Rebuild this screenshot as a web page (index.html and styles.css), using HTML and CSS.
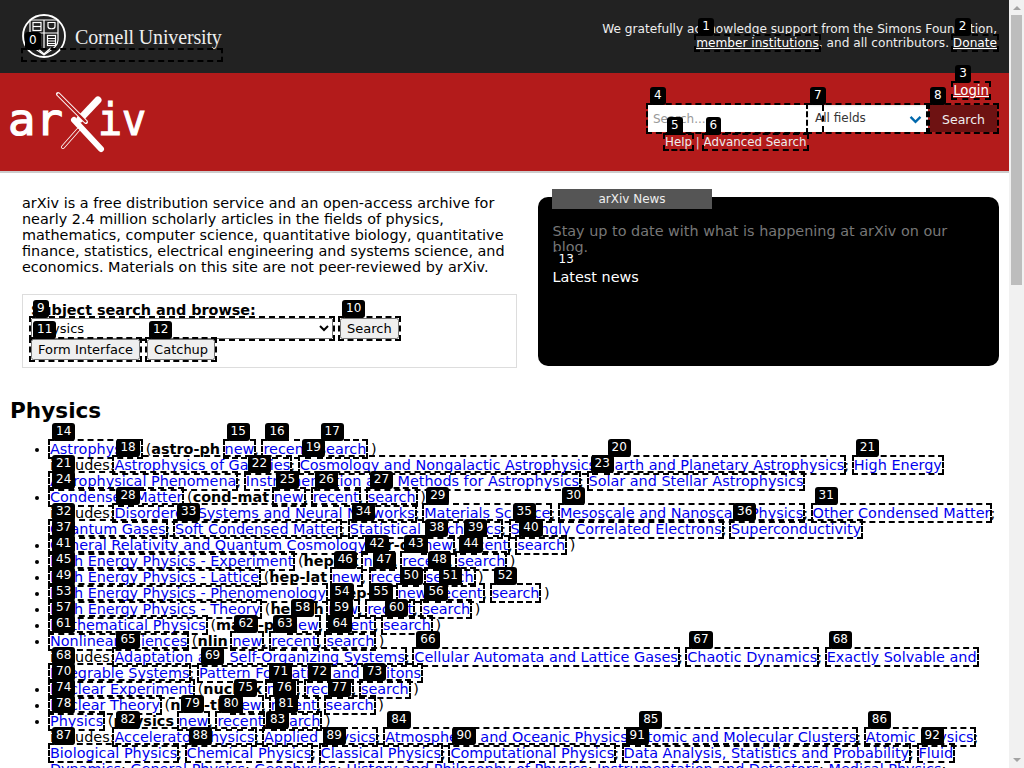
FILE: index.html
```html
<!DOCTYPE html>
<html lang="en">
<head>
<meta charset="utf-8">
<title>arXiv.org e-Print archive</title>
<link rel="stylesheet" href="styles.css">
</head>
<body>
<div class="scrollbar" aria-hidden="true"><span class="arrow-up"></span><span class="thumb"></span><span class="arrow-down"></span></div>
<header>
  <div class="topbar">
    <div class="cornell">
      <svg class="seal" viewBox="0 0 44 44" width="44" height="44" aria-hidden="true">
        <circle cx="22" cy="22" r="21" fill="#222" stroke="#fff" stroke-width="1.800"/>
        <g fill="none" stroke="#fff" stroke-width="1.200">
          <path d="M8 6h28v20c0 7-7 10-14 15C15 36 8 33 8 26z"/>
          <path d="M8 19h28M22 6v28"/>
          <rect x="11" y="8.500" width="8" height="8"/>
          <path d="M11 12.500h8"/>
          <path d="M26 8.500h7v4c0 3-7 3-7 0z"/>
          <rect x="25.500" y="21.500" width="8" height="10"/>
          <path d="M25.500 24.500h8M25.500 27h8M25.500 29.500h8"/>
          <rect x="10.500" y="21.500" width="8" height="10"/>
          <path d="M10.500 24.500h8M10.500 27h8M10.500 29.500h8"/>
          <path d="M15 34l7 6 7-6" stroke-width="1.600"/>
        </g>
      </svg>
      <span class="cornell-name">Cornell University</span>
      <a class="b cornell-box" href="#"><span class="t">0</span></a>
    </div>
    <p class="support">We gratefully acknowledge support from the Simons Foundation,<br>
      <a class="b lt" href="#">member institutions<span class="t">1</span></a>, and all contributors. <a class="b lt" href="#">Donate<span class="t">2</span></a></p>
  </div>
  <div class="redbar">
    <svg class="arxiv-logo" viewBox="0 0 150 80" width="150" height="80" role="img" aria-label="arXiv">
      <text class="logo-letters" x="8" y="50" textLength="55" lengthAdjust="spacingAndGlyphs">ar</text>
      <text class="logo-letters" x="98" y="50" textLength="48" lengthAdjust="spacingAndGlyphs">iv</text>
      <path d="M98 15L80 34" stroke="#fff" stroke-width="7" stroke-linecap="round"/>
      <path d="M74 35l27 29" stroke="#fff" stroke-width="6" stroke-linecap="round"/>
      <path d="M58 9l28 28" stroke="#fff" stroke-width="4" stroke-linecap="round"/>
      <path d="M58.500 9.500l27 27" stroke="#b31b1b" stroke-width="2.400" stroke-linecap="round"/>
      <path d="M63 62l15-17" stroke="#fff" stroke-width="4" stroke-linecap="round"/>
      <path d="M63 62l15-17" stroke="#b31b1b" stroke-width="2.400" stroke-linecap="round"/>
    </svg>
    <div class="search-area">
      <div class="login-row"><a class="b lt" href="#">Login<span class="t">3</span></a></div>
      <form class="search-form">
        <span class="b field"><input class="q" type="text" placeholder="Search..."><span class="t">4</span></span>
        <span class="b field"><span class="fields">All fields<svg class="chev" viewBox="0 0 14 10" width="13" height="9" aria-hidden="true"><path d="M1.500 2l5.500 5.500L12.500 2" fill="none" stroke="#0068ac" stroke-width="2.600"/></svg></span><span class="t">7</span></span>
        <span class="b field"><button class="go" type="button">Search</button><span class="t">8</span></span>
      </form>
      <div class="help-row"><a class="b hl" href="#">Help<span class="t">5</span></a> | <a class="b hl" href="#">Advanced Search<span class="t">6</span></a></div>
    </div>
  </div>
</header>
<main>
  <div class="intro">
    <div class="left">
      <p class="blurb">arXiv is a free distribution service and an open-access archive for nearly 2.4 million scholarly articles in the fields of physics, mathematics, computer science, quantitative biology, quantitative finance, statistics, electrical engineering and systems science, and economics. Materials on this site are not peer-reviewed by arXiv.</p>
      <form class="subject">
        <h2 class="subject-title">Subject search and browse:</h2>
        <div class="subject-row">
          <span class="b ctl"><select class="subject-select"><option>Physics</option></select><span class="t">9</span></span>
          <span class="b ctl"><button class="btn" type="button">Search</button><span class="t">10</span></span>
        </div>
        <div class="subject-row">
          <span class="b ctl"><button class="btn" type="button">Form Interface</button><span class="t">11</span></span>
          <span class="b ctl"><button class="btn" type="button">Catchup</button><span class="t">12</span></span>
        </div>
      </form>
    </div>
    <aside class="news">
      <div class="news-tab">arXiv News</div>
      <p class="news-text">Stay up to date with what is happening at arXiv on our blog.</p>
      <a class="latest" href="#">Latest news<span class="t">13</span></a>
    </aside>
  </div>

  <h2 class="group">Physics</h2>
  <ul class="archives">
    <li><a class="b" href="#">Astrophysics<span class="t">14</span></a> (<b>astro-ph</b> <a class="b" href="#">new<span class="t">15</span></a>, <a class="b" href="#">recent<span class="t">16</span></a>, <a class="b" href="#">search<span class="t">17</span></a> )<br>
    includes:<a class="b" href="#">Astrophysics of Galaxies<span class="t">18</span></a>; <a class="b" href="#">Cosmology and Nongalactic Astrophysics<span class="t">19</span></a>; <a class="b" href="#">Earth and Planetary Astrophysics<span class="t">20</span></a>; <a class="b" href="#">High Energy<span class="t">21</span></a> <a class="b" href="#">Astrophysical Phenomena<span class="t">21</span></a>; <a class="b" href="#">Instrumentation and Methods for Astrophysics<span class="t">22</span></a>; <a class="b" href="#">Solar and Stellar Astrophysics<span class="t">23</span></a></li>
    <li><a class="b" href="#">Condensed Matter<span class="t">24</span></a> (<b>cond-mat</b> <a class="b" href="#">new<span class="t">25</span></a>, <a class="b" href="#">recent<span class="t">26</span></a>, <a class="b" href="#">search<span class="t">27</span></a> )<br>
    includes:<a class="b" href="#">Disordered Systems and Neural Networks<span class="t">28</span></a>; <a class="b" href="#">Materials Science<span class="t">29</span></a>; <a class="b" href="#">Mesoscale and Nanoscale Physics<span class="t">30</span></a>; <a class="b" href="#">Other Condensed Matter<span class="t">31</span></a>; <a class="b" href="#">Quantum Gases<span class="t">32</span></a>; <a class="b" href="#">Soft Condensed Matter<span class="t">33</span></a>; <a class="b" href="#">Statistical Mechanics<span class="t">34</span></a>; <a class="b" href="#">Strongly Correlated Electrons<span class="t">35</span></a>; <a class="b" href="#">Superconductivity<span class="t">36</span></a></li>
    <li><a class="b" href="#">General Relativity and Quantum Cosmology<span class="t">37</span></a> (<b>gr-qc</b> <a class="b" href="#">new<span class="t">38</span></a>, <a class="b" href="#">recent<span class="t">39</span></a>, <a class="b" href="#">search<span class="t">40</span></a> )</li>
    <li><a class="b" href="#">High Energy Physics - Experiment<span class="t">41</span></a> (<b>hep-ex</b> <a class="b" href="#">new<span class="t">42</span></a>, <a class="b" href="#">recent<span class="t">43</span></a>, <a class="b" href="#">search<span class="t">44</span></a> )</li>
    <li><a class="b" href="#">High Energy Physics - Lattice<span class="t">45</span></a> (<b>hep-lat</b> <a class="b" href="#">new<span class="t">46</span></a>, <a class="b" href="#">recent<span class="t">47</span></a>, <a class="b" href="#">search<span class="t">48</span></a> )</li>
    <li><a class="b" href="#">High Energy Physics - Phenomenology<span class="t">49</span></a> (<b>hep-ph</b> <a class="b" href="#">new<span class="t">50</span></a>, <a class="b" href="#">recent<span class="t">51</span></a>, <a class="b" href="#">search<span class="t">52</span></a> )</li>
    <li><a class="b" href="#">High Energy Physics - Theory<span class="t">53</span></a> (<b>hep-th</b> <a class="b" href="#">new<span class="t">54</span></a>, <a class="b" href="#">recent<span class="t">55</span></a>, <a class="b" href="#">search<span class="t">56</span></a> )</li>
    <li><a class="b" href="#">Mathematical Physics<span class="t">57</span></a> (<b>math-ph</b> <a class="b" href="#">new<span class="t">58</span></a>, <a class="b" href="#">recent<span class="t">59</span></a>, <a class="b" href="#">search<span class="t">60</span></a> )</li>
    <li><a class="b" href="#">Nonlinear Sciences<span class="t">61</span></a> (<b>nlin</b> <a class="b" href="#">new<span class="t">62</span></a>, <a class="b" href="#">recent<span class="t">63</span></a>, <a class="b" href="#">search<span class="t">64</span></a> )<br>
    includes:<a class="b" href="#">Adaptation and Self-Organizing Systems<span class="t">65</span></a>; <a class="b" href="#">Cellular Automata and Lattice Gases<span class="t">66</span></a>; <a class="b" href="#">Chaotic Dynamics<span class="t">67</span></a>; <a class="b" href="#">Exactly Solvable and<span class="t">68</span></a> <a class="b" href="#">Integrable Systems<span class="t">68</span></a>; <a class="b" href="#">Pattern Formation and Solitons<span class="t">69</span></a></li>
    <li><a class="b" href="#">Nuclear Experiment<span class="t">70</span></a> (<b>nucl-ex</b> <a class="b" href="#">new<span class="t">71</span></a>, <a class="b" href="#">recent<span class="t">72</span></a>, <a class="b" href="#">search<span class="t">73</span></a> )</li>
    <li><a class="b" href="#">Nuclear Theory<span class="t">74</span></a> (<b>nucl-th</b> <a class="b" href="#">new<span class="t">75</span></a>, <a class="b" href="#">recent<span class="t">76</span></a>, <a class="b" href="#">search<span class="t">77</span></a> )</li>
    <li><a class="b" href="#">Physics<span class="t">78</span></a> (<b>physics</b> <a class="b" href="#">new<span class="t">79</span></a>, <a class="b" href="#">recent<span class="t">80</span></a>, <a class="b" href="#">search<span class="t">81</span></a> )<br>
    includes:<a class="b" href="#">Accelerator Physics<span class="t">82</span></a>; <a class="b" href="#">Applied Physics<span class="t">83</span></a>; <a class="b" href="#">Atmospheric and Oceanic Physics<span class="t">84</span></a>; <a class="b" href="#">Atomic and Molecular Clusters<span class="t">85</span></a>; <a class="b" href="#">Atomic Physics<span class="t">86</span></a>; <a class="b" href="#">Biological Physics<span class="t">87</span></a>; <a class="b" href="#">Chemical Physics<span class="t">88</span></a>; <a class="b" href="#">Classical Physics<span class="t">89</span></a>; <a class="b" href="#">Computational Physics<span class="t">90</span></a>; <a class="b" href="#">Data Analysis, Statistics and Probability<span class="t">91</span></a>; <a class="b" href="#">Fluid<span class="t">92</span></a> <a href="#">Dynamics</a>; <a href="#">General Physics</a>; <a href="#">Geophysics</a>; <a href="#">History and Philosophy of Physics</a>; <a href="#">Instrumentation and Detectors</a>; <a href="#">Medical Physics</a>;</li>
  </ul>
</main>
</body>
</html>
```

FILE: styles.css
```css
* { box-sizing: border-box; }
html, body { margin: 0; padding: 0; }
html { height: 768px; overflow: hidden; }
body {
  font-family: "DejaVu Sans", sans-serif;
  font-size: 14.4px;
  color: #000;
  background: #fff;
  margin-right: 15px;
}
a { color: #0000ee; text-decoration: none; }

/* fake window scrollbar */
.scrollbar {
  position: fixed;
  top: 0;
  right: 0;
  bottom: 0;
  width: 15px;
  background: #f1f1f1;
  display: flex;
  flex-direction: column;
  align-items: center;
}
.arrow-up {
  flex: none;
  width: 0;
  height: 0;
  margin-top: 6px;
  border: 4px solid transparent;
  border-top: 0;
  border-bottom: 4px solid #a3a3a3;
}
.thumb { flex: none; width: 11px; height: 270px; margin-top: 5px; background: #bdbdbd; }
.arrow-down {
  flex: none;
  width: 0;
  height: 0;
  margin-top: auto;
  margin-bottom: 6px;
  border: 4px solid transparent;
  border-bottom: 0;
  border-top: 4px solid #a3a3a3;
}

/* annotation overlay */
.b { position: relative; outline: 2px dashed #000; }
.t {
  position: absolute;
  left: 2px;
  bottom: 100%;
  z-index: 10;
  padding: 0 4px;
  height: 18px;
  line-height: 17px;
  font-family: "DejaVu Sans", sans-serif;
  font-size: 12px;
  font-weight: 400;
  color: #fff;
  background: #000;
  border-radius: 3px;
  white-space: nowrap;
  text-decoration: none;
  display: block;
}

/* header */
.topbar {
  height: 73px;
  background: #222;
  display: flex;
  justify-content: space-between;
  padding: 14px 12px 0 22px;
}
.cornell { position: relative; display: flex; align-items: flex-start; height: 46px; }
.seal { flex: none; }
.cornell-name {
  margin: 12px 0 0 9px;
  font-family: "Liberation Serif", serif;
  font-size: 20px;
  letter-spacing: -0.15px;
  color: #eee;
}
.cornell-box { position: absolute; display: block; left: 1px; top: 36px; width: 198px; height: 10px; }
.support {
  margin: 8px 0 0;
  color: #eee;
  font-size: 12.150px;
  line-height: 14px;
  text-align: right;
}
.lt { color: #fff; text-decoration: underline; }

.redbar {
  height: 100px;
  background: #b31b1b;
  border-bottom: 2px solid #ccc;
  display: flex;
  justify-content: space-between;
  padding-right: 12px;
}
.arxiv-logo { margin-top: 12px; }
.logo-letters {
  font-family: "DejaVu Sans Mono", monospace;
  font-size: 44px;
  font-weight: 400;
  fill: #fff;
  stroke: #fff;
  stroke-width: 1.200px;
}
.search-area { width: 350px; display: flex; flex-direction: column; align-items: flex-end; }
.login-row { height: 32px; padding: 9px 8px 0 0; font-size: 13.300px; line-height: 18px; }
.search-form { display: flex; align-items: stretch; height: 27px; width: 350px; justify-content: flex-end; }
.field { display: flex; }
.q {
  width: 160px;
  height: 27px;
  border: 0;
  padding: 0 5px;
  font: 12px "DejaVu Sans", sans-serif;
  background: #fff;
}
.q::placeholder { color: #999; }
.fields {
  position: relative;
  width: 120px;
  height: 27px;
  padding-left: 7px;
  background: #fff;
  color: #363636;
  font-size: 12px;
  line-height: 27px;
  box-shadow: inset 0 1px 2px rgba(10,10,10,.1);
}
.fields::after {
  content: "";
  position: absolute;
  left: 0;
  top: 0;
  bottom: 0;
  width: 14px;
  border-right: 2px dashed #000;
}
.chev { position: absolute; right: 6px; top: 10px; }
.go {
  width: 67px;
  height: 27px;
  margin-left: 2px;
  padding: 2px 0 0;
  border: 0;
  background: #6e1212;
  color: #eee;
  font: 12.500px "DejaVu Sans", sans-serif;
}
.help-row { width: 145px; margin: 2px 187px 0 0; color: #ddd; font-size: 11.850px; line-height: 14px; white-space: nowrap; padding-top: 1px; }
.hl { color: #eee; text-decoration: none; }

/* intro */
.intro { display: flex; padding: 0 10px 0 22px; gap: 21px; }
.left { width: 495px; flex: none; }
.blurb { margin: 22px 0 19px; line-height: 16px; }
.subject { border: 1px solid #ddd; padding: 7px 8px; height: 74px; }
.subject-title { margin: 0; font-size: 14.400px; line-height: 16px; }
.subject-row { display: flex; gap: 7px; }
.ctl { display: block; height: 21px; }
.subject-select { width: 302px; height: 21px; font: 13px "DejaVu Sans", sans-serif; }
.btn { height: 21px; padding: 0 5px; font: 13px "DejaVu Sans", sans-serif; }

.news {
  position: relative;
  flex: 1;
  margin-top: 24px;
  height: 169px;
  background: #000;
  border-radius: 10px;
  padding: 26px 14px 0 14.500px;
  color: #fff;
}
.news-tab {
  position: absolute;
  left: 14px;
  top: -8px;
  width: 160px;
  height: 20px;
  background: #555;
  color: #eee;
  text-align: center;
  font-size: 12px;
  line-height: 20px;
}
.news-text { margin: 0; color: #777; line-height: 16px; }
.latest { position: relative; display: inline-block; margin-top: 14px; color: #fff; text-decoration: none; line-height: 16px; }

/* archive list */
.group { margin: 31px 0 18px 10px; font-size: 21.600px; line-height: 24px; }
.archives { margin: 0; padding-left: 50px; padding-right: 12px; line-height: 16px; }
```
